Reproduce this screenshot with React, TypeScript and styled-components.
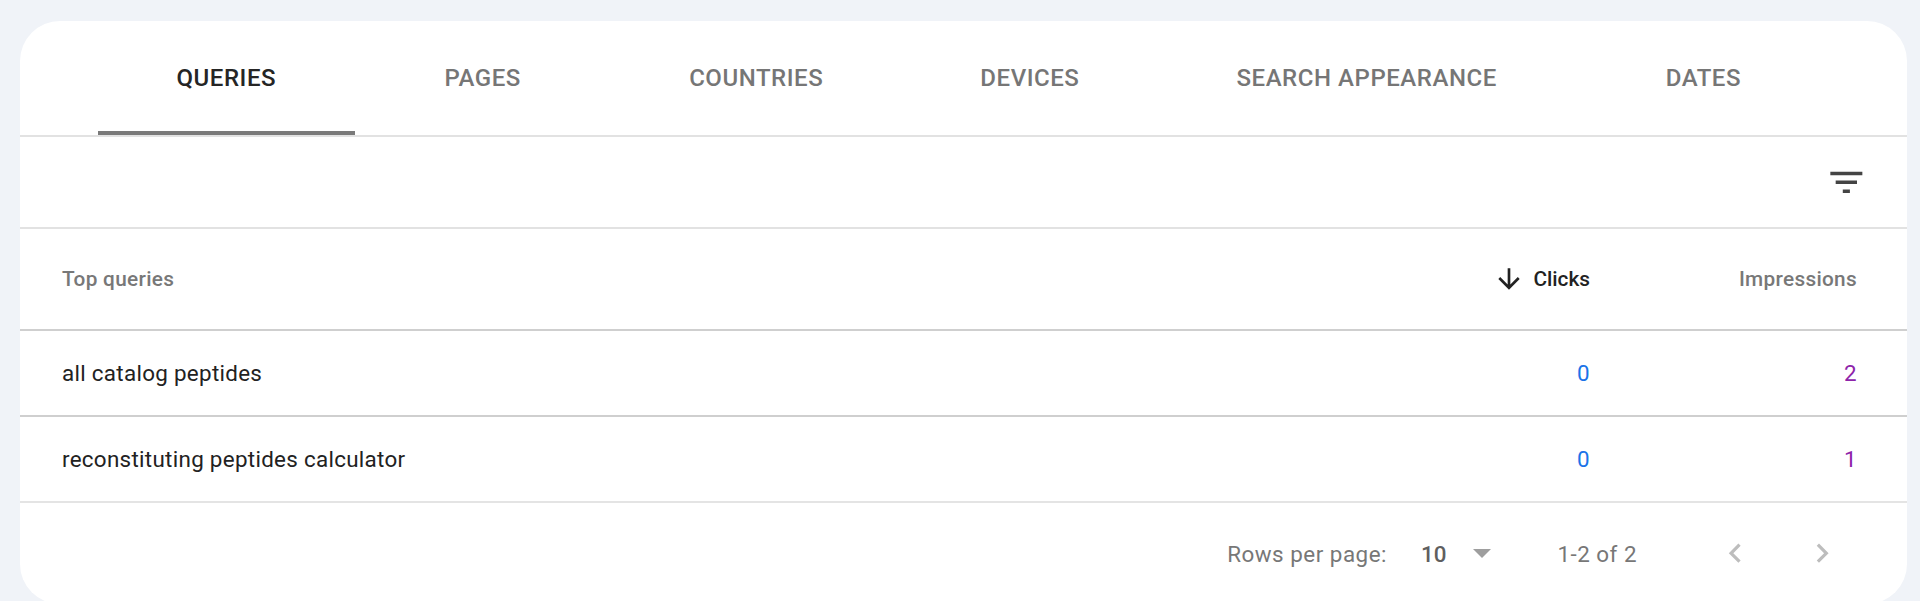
import React, { useState } from "react";
import styled, { createGlobalStyle } from "styled-components";

const GlobalStyle = createGlobalStyle`
  html, body {
    margin: 0;
    padding: 0;
    background: #f0f3f8;
    font-family: Roboto, "Noto Sans", Arial, sans-serif;
  }
`;

const Page = styled.div`
  padding: 21px 13px 0 20px;
  height: 601px;
  box-sizing: border-box;
  overflow: hidden;
`;

const Card = styled.div`
  background: #fff;
  border-radius: 40px;
  overflow: hidden;
`;

const TabBar = styled.div`
  display: flex;
  padding-left: 78px;
  border-bottom: 2px solid #e2e2e2;
`;

const Tab = styled.div<{ $active?: boolean }>`
  position: relative;
  min-width: 256px;
  height: 114px;
  padding: 0 78.5px;
  box-sizing: border-box;
  display: flex;
  align-items: center;
  justify-content: center;
  font-size: 24px;
  font-weight: 500;
  letter-spacing: 0.55px;
  text-transform: uppercase;
  white-space: nowrap;
  color: ${(p) => (p.$active ? "#252525" : "#767676")};

  &::after {
    content: "";
    position: absolute;
    left: 0;
    right: 0;
    bottom: 0;
    height: 4px;
    background: ${(p) => (p.$active ? "#7a7a7a" : "transparent")};
  }
`;

const Toolbar = styled.div`
  height: 90px;
  display: flex;
  align-items: center;
  justify-content: flex-end;
  padding-right: 39px;
  border-bottom: 2px solid #e2e2e2;
`;

const IconBox = styled.svg<{ $size: number; $color: string }>`
  width: ${(p) => p.$size}px;
  height: ${(p) => p.$size}px;
  fill: ${(p) => p.$color};
  flex-shrink: 0;
  display: block;
`;

const Row = styled.div<{ $head?: boolean; $last?: boolean }>`
  display: grid;
  grid-template-columns: 1fr 300px 267px;
  align-items: center;
  height: ${(p) => (p.$head ? 100 : 84)}px;
  padding: 0 50px 0 42px;
  border-bottom: 2px solid ${(p) => (p.$last ? "#e4e4e4" : "#cfcfcf")};
`;

const HeadCell = styled.div<{ $right?: boolean; $active?: boolean }>`
  display: flex;
  align-items: center;
  justify-content: ${(p) => (p.$right ? "flex-end" : "flex-start")};
  font-size: 20.8px;
  font-weight: 500;
  letter-spacing: ${(p) => (p.$active ? 0 : 0.3)}px;
  color: ${(p) => (p.$active ? "#222" : "#787878")};
`;

const SortIcon = styled(IconBox)`
  margin-right: 8px;
`;

const Cell = styled.div<{ $color?: string; $right?: boolean }>`
  font-size: 22.4px;
  letter-spacing: 0.3px;
  color: ${(p) => p.$color || "#222"};
  text-align: ${(p) => (p.$right ? "right" : "left")};
`;

const Footer = styled.div`
  height: 101px;
  display: flex;
  align-items: center;
  justify-content: flex-end;
  padding-right: 46px;
  font-size: 22.4px;
  letter-spacing: 0.5px;
  color: #777;
`;

const RowsLabel = styled.span`
  margin-right: 34px;
`;

const PageSize = styled.span`
  color: #5f5f5f;
  font-weight: 500;
  letter-spacing: 0;
`;

const DropArrow = styled.svg`
  width: 18px;
  height: 9px;
  margin-left: 27px;
  fill: #9e9e9e;
`;

const Range = styled.span`
  margin-left: 66px;
  margin-right: 60px;
`;

const PagerButton = styled.button`
  width: 77px;
  height: 77px;
  border: 0;
  padding: 0;
  background: transparent;
  display: flex;
  align-items: center;
  justify-content: center;
  & + & {
    margin-left: 10px;
  }
`;

const tabs = ["Queries", "Pages", "Countries", "Devices", "Search appearance", "Dates"];

const rows = [
  { query: "all catalog peptides", clicks: 0, impressions: 2 },
  { query: "reconstituting peptides calculator", clicks: 0, impressions: 1 },
];

function App() {
  const [activeTab] = useState(0);
  return (
    <>
      <GlobalStyle />
      <Page>
        <Card>
          <TabBar>
            {tabs.map((t, i) => (
              <Tab key={t} $active={i === activeTab}>
                {t}
              </Tab>
            ))}
          </TabBar>
          <Toolbar>
            <IconBox $size={42.7} $color="#444" viewBox="0 0 24 24">
              <path d="M10 18h4v-2h-4v2zM3 6v2h18V6H3zm3 7h12v-2H6v2z" />
            </IconBox>
          </Toolbar>
          <Row $head>
            <HeadCell>Top queries</HeadCell>
            <HeadCell $right $active>
              <SortIcon $size={32} $color="#222" viewBox="0 0 24 24">
                <path d="M20 12l-1.41-1.41L13 16.17V4h-2v12.17l-5.58-5.59L4 12l8 8 8-8z" />
              </SortIcon>
              Clicks
            </HeadCell>
            <HeadCell $right>Impressions</HeadCell>
          </Row>
          {rows.map((r, i) => (
            <Row key={r.query} $last={i === rows.length - 1}>
              <Cell>{r.query}</Cell>
              <Cell $right $color="#1a73e8">
                {r.clicks}
              </Cell>
              <Cell $right $color="#8e24aa">
                {r.impressions}
              </Cell>
            </Row>
          ))}
          <Footer>
            <RowsLabel>Rows per page:</RowsLabel>
            <PageSize>10</PageSize>
            <DropArrow viewBox="0 0 10 5">
              <path d="M0 0l5 5 5-5z" />
            </DropArrow>
            <Range>1-2 of 2</Range>
            <PagerButton aria-label="Previous page">
              <IconBox $size={38.4} $color="#bdbdbd" viewBox="0 0 24 24">
                <path d="M15.41 7.41L14 6l-6 6 6 6 1.41-1.41L10.83 12z" />
              </IconBox>
            </PagerButton>
            <PagerButton aria-label="Next page">
              <IconBox $size={38.4} $color="#bdbdbd" viewBox="0 0 24 24">
                <path d="M10 6L8.59 7.41 13.17 12l-4.58 4.59L10 18l6-6z" />
              </IconBox>
            </PagerButton>
          </Footer>
        </Card>
      </Page>
    </>
  );
}

export default App;
